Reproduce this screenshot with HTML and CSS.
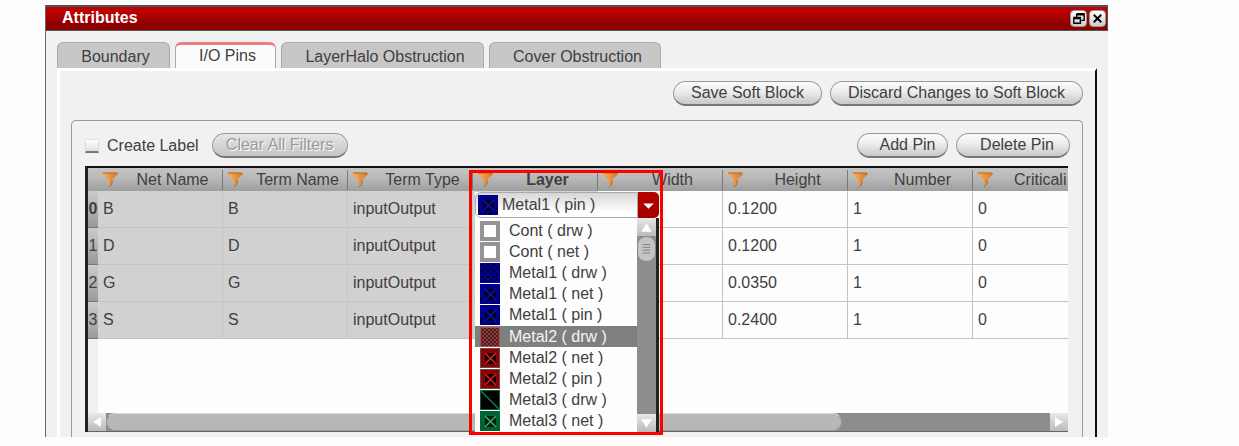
FILE: index.html
```html
<!DOCTYPE html>
<html lang="en">
<head>
<meta charset="utf-8">
<title>Attributes</title>
<link rel="stylesheet" href="styles.css">
</head>
<body>
<svg class="defs" aria-hidden="true">
  <defs>
    <linearGradient id="orange" x1="0" x2="1"><stop offset="0" stop-color="#f8b263"/><stop offset="1" stop-color="#d9771f"/></linearGradient>
    <pattern id="dots" width="4" height="4" patternUnits="userSpaceOnUse"><path d="M0 0h2v2h-2zM2 2h2v2h-2z" fill="#000"/></pattern>
    <pattern id="sparse" width="6" height="6" patternUnits="userSpaceOnUse"><path d="M1 1h2v2h-2zM4 4h2v2h-2z" fill="#000"/></pattern>
    <symbol id="funnel" viewBox="0 0 16 16"><path d="M0 1h16v1l-6 6v4l-3 3v-7L0 2z" fill="url(#orange)"/><path d="M1 1h14M10 8v4l-3 3" fill="none" stroke="#b5651d"/></symbol>
    <symbol id="cont" viewBox="0 0 20 20"><path d="M0 0h20v20H0z" fill="#949494"/><path d="M4 4h12v12H4z" fill="#fff"/></symbol>
    <symbol id="blue-dots" viewBox="0 0 20 20"><path d="M0 0h20v20H0z" fill="#00008c"/><path d="M1 1h18v18H1z" fill="url(#sparse)"/></symbol>
    <symbol id="blue-x" viewBox="0 0 20 20"><path d="M0 0h20v20H0z" fill="#00008c"/><path d="M5 5h11v11H5zM0 14h2v3H0zM11 18h3v2h-3zM18 13h2v2h-2z" fill="#000018"/><path d="M5 5l11 11M16 5L5 16" stroke="#1010b8" stroke-width="1.500"/></symbol>
    <symbol id="red-dots" viewBox="0 0 20 20"><path d="M0 0h20v20H0z" fill="#a85050"/><path d="M1 1h18v18H1z" fill="#404040"/><path d="M1 1h18v18H1z" fill="#903a3a"/><path d="M1 1h18v18H1z" fill="url(#dots)" opacity=".5"/></symbol>
    <symbol id="red-x" viewBox="0 0 20 20"><path d="M0 0h20v20H0z" fill="#555"/><path d="M1 1h18v18H1z" fill="#900000"/><path d="M5 5h11v11H5z" fill="#100000"/><path d="M5 5l11 11M16 5L5 16" stroke="#e02020" stroke-width="1.500"/></symbol>
    <symbol id="green-line" viewBox="0 0 20 20"><path d="M0 0h20v20H0z" fill="#0b5c38"/><path d="M1 1h18v18H1z" fill="#000"/><path d="M1 1l18 18" stroke="#0e8a4f" stroke-width="1.500"/></symbol>
    <symbol id="green-x" viewBox="0 0 20 20"><path d="M0 0h20v20H0z" fill="#006432"/><path d="M5 5h11v11H5z" fill="#001a0c"/><path d="M5 5l11 11M16 5L5 16" stroke="#32b070" stroke-width="1.500"/></symbol>
  </defs>
</svg>

<main class="window">
  <header class="titlebar">
    <h1 class="title">Attributes</h1>
    <button class="winbtn" type="button" aria-label="Float"><svg viewBox="0 0 16 16"><path d="M6 3h8v7h-3M6 3v3M6 4h8M3 7h7v6H3zM3 8h7" fill="none" stroke="#000" stroke-width="1.500"/></svg></button>
    <button class="winbtn" type="button" aria-label="Close"><svg viewBox="0 0 16 16"><path d="M4 4l8 8M12 4l-8 8" fill="none" stroke="#000" stroke-width="2"/></svg></button>
  </header>

  <nav class="tabs">
    <button class="tab tab-boundary" type="button">Boundary</button>
    <button class="tab tab-active" type="button">I/O Pins</button>
    <button class="tab tab-halo" type="button">LayerHalo Obstruction</button>
    <button class="tab tab-cover" type="button">Cover Obstruction</button>
  </nav>

  <section class="page">
    <div class="actions">
      <button class="pill pill-save" type="button">Save Soft Block</button>
      <button class="pill pill-discard" type="button">Discard Changes to Soft Block</button>
    </div>

    <div class="group">
      <div class="tools">
        <input class="check" type="checkbox" id="create-label">
        <label class="check-label" for="create-label">Create Label</label>
        <button class="pill pill-clear" type="button" disabled>Clear All Filters</button>
        <span class="spacer"></span>
        <button class="pill pill-add" type="button">Add Pin</button>
        <button class="pill pill-delete" type="button">Delete Pin</button>
      </div>

      <div class="frame">
        <div class="viewport">
          <table class="pins">
            <colgroup><col class="col-num"><col class="col"><col class="col"><col class="col"><col class="col"><col class="col"><col class="col"><col class="col"><col></colgroup>
            <thead>
              <tr>
                <th></th>
                <th><div class="head"><svg class="funnel"><use href="#funnel"/></svg><span>Net Name</span></div></th>
                <th><div class="head"><svg class="funnel"><use href="#funnel"/></svg><span>Term Name</span></div></th>
                <th><div class="head"><svg class="funnel"><use href="#funnel"/></svg><span>Term Type</span></div></th>
                <th><div class="head head-current"><svg class="funnel"><use href="#funnel"/></svg><span>Layer</span></div></th>
                <th><div class="head"><svg class="funnel"><use href="#funnel"/></svg><span>Width</span></div></th>
                <th><div class="head"><svg class="funnel"><use href="#funnel"/></svg><span>Height</span></div></th>
                <th><div class="head"><svg class="funnel"><use href="#funnel"/></svg><span>Number</span></div></th>
                <th><div class="head head-last"><svg class="funnel"><use href="#funnel"/></svg><span>Criticali</span></div></th>
              </tr>
            </thead>
            <tbody>
              <tr><th class="num num-current">0</th><td class="fixed">B</td><td class="fixed">B</td><td class="fixed">inputOutput</td><td class="fixed"></td><td></td><td>0.1200</td><td>1</td><td>0</td></tr>
              <tr><th class="num">1</th><td class="fixed">D</td><td class="fixed">D</td><td class="fixed">inputOutput</td><td class="fixed"></td><td></td><td>0.1200</td><td>1</td><td>0</td></tr>
              <tr><th class="num">2</th><td class="fixed">G</td><td class="fixed">G</td><td class="fixed">inputOutput</td><td class="fixed"></td><td></td><td>0.0350</td><td>1</td><td>0</td></tr>
              <tr><th class="num">3</th><td class="fixed">S</td><td class="fixed">S</td><td class="fixed">inputOutput</td><td class="fixed"></td><td></td><td>0.2400</td><td>1</td><td>0</td></tr>
            </tbody>
          </table>
        </div>
        <div class="hscroll">
          <button class="arrow" type="button" aria-label="Scroll left"><svg viewBox="0 0 18 18"><path d="M13 4v10L5 9z" fill="#fff"/></svg></button>
          <div class="htrack"><div class="hthumb"></div></div>
          <button class="arrow" type="button" aria-label="Scroll right"><svg viewBox="0 0 18 18"><path d="M5 4v10l8-5z" fill="#fff"/></svg></button>
        </div>

        <div class="editor">
          <div class="combo">
            <svg class="swatch combo-swatch"><use href="#blue-x"/></svg>
            <select class="combo-select" aria-label="Layer">
              <option>Metal1 ( pin )</option>
            </select>
            <span class="combo-arrow"><svg viewBox="0 0 20 26"><path d="M5 11h10l-5 5z" fill="#fff"/></svg></span>
          </div>
          <div class="popup">
            <ul class="layers" role="listbox" aria-label="Layers">
              <li class="layer" role="option"><svg class="swatch"><use href="#cont"/></svg>Cont ( drw )</li>
              <li class="layer" role="option"><svg class="swatch"><use href="#cont"/></svg>Cont ( net )</li>
              <li class="layer" role="option"><svg class="swatch"><use href="#blue-dots"/></svg>Metal1 ( drw )</li>
              <li class="layer" role="option"><svg class="swatch"><use href="#blue-x"/></svg>Metal1 ( net )</li>
              <li class="layer" role="option"><svg class="swatch"><use href="#blue-x"/></svg>Metal1 ( pin )</li>
              <li class="layer layer-hover" role="option" aria-selected="true"><svg class="swatch"><use href="#red-dots"/></svg>Metal2 ( drw )</li>
              <li class="layer" role="option"><svg class="swatch"><use href="#red-x"/></svg>Metal2 ( net )</li>
              <li class="layer" role="option"><svg class="swatch"><use href="#red-x"/></svg>Metal2 ( pin )</li>
              <li class="layer" role="option"><svg class="swatch"><use href="#green-line"/></svg>Metal3 ( drw )</li>
              <li class="layer" role="option"><svg class="swatch"><use href="#green-x"/></svg>Metal3 ( net )</li>
            </ul>
            <div class="vscroll">
              <button class="arrow" type="button" aria-label="Scroll up"><svg viewBox="0 0 18 18"><path d="M4 13h10L9 5z" fill="#fff"/></svg></button>
              <div class="vtrack"><div class="vthumb"><svg viewBox="0 0 18 26"><path d="M5 8h8M5 11h8M5 14h8M5 17h8" stroke="#808080"/></svg></div></div>
              <button class="arrow" type="button" aria-label="Scroll down"><svg viewBox="0 0 18 18"><path d="M4 5h10l-5 8z" fill="#fff"/></svg></button>
            </div>
          </div>
        </div>
      </div>
    </div>
  </section>
</main>
</body>
</html>
```
FILE: styles.css
```css
* { box-sizing: border-box; }

body {
  margin: 0;
  padding: 5px 131px 0 45px;
  background: #fdfdfd;
  color: #404040;
  font: 16px/20px "Liberation Sans", Arial, sans-serif;
}

button, select { margin: 0; font: inherit; color: inherit; }
svg { display: block; }
.defs { position: absolute; width: 0; height: 0; }

.window { background: #f1f1f1; border-left: 1px solid #666; }

/* title bar */
.titlebar {
  display: flex;
  align-items: center;
  gap: 2px;
  height: 26px;
  padding: 0 1px 0 16px;
  border: 1px solid #4d5555;
  border-top-width: 2px;
  border-left: 0;
  background: linear-gradient(#c40000, #b40000 35%, #930000 65%, #8b0000);
}
.title { flex: 1; margin: 0; padding-bottom: 2px; color: #fff; font-size: 16px; line-height: 20px; }
.winbtn {
  width: 17px;
  height: 17px;
  padding: 0;
  border: 1px solid #999;
  border-radius: 4px;
  background: linear-gradient(#fff, #ccc);
}

/* tabs */
.tabs { display: flex; gap: 5px; padding: 11px 11px 0; }
.tab {
  height: 26px;
  padding: 3px 0 0;
  border: 1px solid #aaa;
  border-bottom: 0;
  border-radius: 6px 6px 0 0;
  background: #c8c7c8;
  font-size: 16px;
  line-height: 20px;
}
.tab-boundary { width: 113px; padding-left: 4px; }
.tab-active { width: 101px; border-top: 3px solid #e88080; padding: 0 0 2px 4px; background: #fbfbfb; }
.tab-halo { width: 203px; padding-left: 5px; }
.tab-cover { width: 172px; padding-left: 5px; }

/* tab page */
.page {
  margin: 0 11px;
  padding: 10px 12px 0 11px;
  border-top: 3px solid #fff;
  border-left: 3px solid #fff;
  border-right: 2px solid #111;
}
.actions { display: flex; justify-content: flex-end; gap: 8px; }
.pill {
  height: 25px;
  padding: 0;
  border: 1px solid #999;
  border-bottom: 2px solid #777;
  border-radius: 13px;
  background: linear-gradient(#fbfbfb, #ececec 45%, #c8c8c8);
  line-height: 20px;
}
.pill-save { width: 149px; }
.pill-discard { width: 253px; }
.pill-clear { width: 136px; margin-left: 5px; background: linear-gradient(#e6e6e6, #c4c4c4); color: #999; text-shadow: 1px 1px #fff; }
.pill-add { width: 91px; padding-left: 10px; }
.pill-delete { width: 114px; padding-left: 8px; }

.group {
  margin-top: 14px;
  padding: 12px 12px 5px 13px;
  border: 1px solid #999;
  border-bottom: 0;
  border-radius: 5px 5px 0 0;
}
.tools { display: flex; align-items: center; gap: 8px; margin-bottom: 8px; }
.spacer { flex: 1; }
.check {
  appearance: none;
  width: 14px;
  height: 14px;
  margin: 0;
  border: 1px solid #ddd;
  border-bottom: 2px solid #777;
  background: linear-gradient(#fff, #e0e0e0);
}

/* pin table */
.frame {
  position: relative;
  margin-right: 2px;
  border-left: 3px solid #222;
  border-top: 2px solid #111;
  background: #fdfdfd;
}
.viewport { height: 245px; overflow: hidden; background: linear-gradient(90deg, #f1f1f1 10px, #fdfdfd 10px); }
.pins { width: 100%; table-layout: fixed; border-collapse: separate; border-spacing: 0; }
.col-num { width: 10px; }
.col { width: 125px; }
.pins th { padding: 0; font-weight: normal; }
.pins thead th { height: 23px; background: linear-gradient(#c4c4c4, #b8b8b8 45%, #9e9e9e); }
.head { display: flex; align-items: center; height: 20px; padding-left: 4px; border-right: 1px solid #777; }
.head span { flex: 1; text-align: center; padding-left: 5px; }
.head-current { font-weight: bold; }
.head-last { border-right: 0; }
.head-last span { text-align: left; padding-left: 21px; }
.funnel { width: 16px; height: 16px; flex: none; }
.pins td {
  height: 37px;
  padding: 0 5px;
  border-right: 1px solid #c4c4c4;
  border-bottom: 1px solid #c4c4c4;
}
.pins td:last-child { border-right: 0; }
.pins .fixed { background: #d1d1d1; border-color: #c6c4c6; }
.pins .num { background: linear-gradient(#ccc, #999); border-bottom: 1px solid #777; }
.pins .num-current { font-weight: bold; }

/* scroll bars */
.arrow {
  width: 18px;
  height: 18px;
  flex: none;
  padding: 0;
  border: 0;
  background: linear-gradient(#e8e8e8, #bbb);
}
.hscroll { display: flex; height: 19px; border-bottom: 1px solid #666; background: #8c8e8c; }
.htrack { flex: 1; }
.hthumb { width: 78%; height: 18px; border: 1px solid #999; border-top-color: #ddd; border-radius: 9px; background: #b7b7b7; }

/* layer cell editor */
.editor {
  position: absolute;
  left: 381px;
  top: 2px;
  width: 194px;
  height: 265px;
  padding: 19px 1px 1px 3px;
  border: 3px solid #f00;
}
.combo { display: flex; position: relative; height: 26px; background: #fff; }
.combo-swatch { position: absolute; left: 3px; top: 3px; pointer-events: none; }
.combo-select {
  appearance: none;
  flex: 1;
  height: 26px;
  padding: 0 0 0 26px;
  border: 1px solid #aaa;
  border-radius: 6px 0 0 6px;
  background: linear-gradient(#d6d6d6, #fff 80%);
  font-size: 16px;
}
.combo-arrow { width: 21px; border-radius: 0 5px 5px 0; background: linear-gradient(#b80000, #a00000); }
.popup {
  display: flex;
  height: 214px;
  border-right: 3px solid #222;
  background: #fdfdfd;
}
.layers { flex: 1; display: grid; grid-template-rows: repeat(10, 1fr); margin: 0; padding: 2px 0 0; list-style: none; }
.layer { display: flex; align-items: center; gap: 9px; padding-left: 5px; min-height: 0; }
.layer-hover { background: #7e807e; color: #f4f4f4; }
.swatch { width: 20px; height: 20px; flex: none; }
.vscroll { display: flex; flex-direction: column; width: 19px; background: #8c8e8c; }
.vscroll .arrow { width: 19px; }
.vtrack { flex: 1; }
.vthumb { height: 26px; border: 1px solid #888; border-radius: 9px; background: #c4c4c4; }
```
